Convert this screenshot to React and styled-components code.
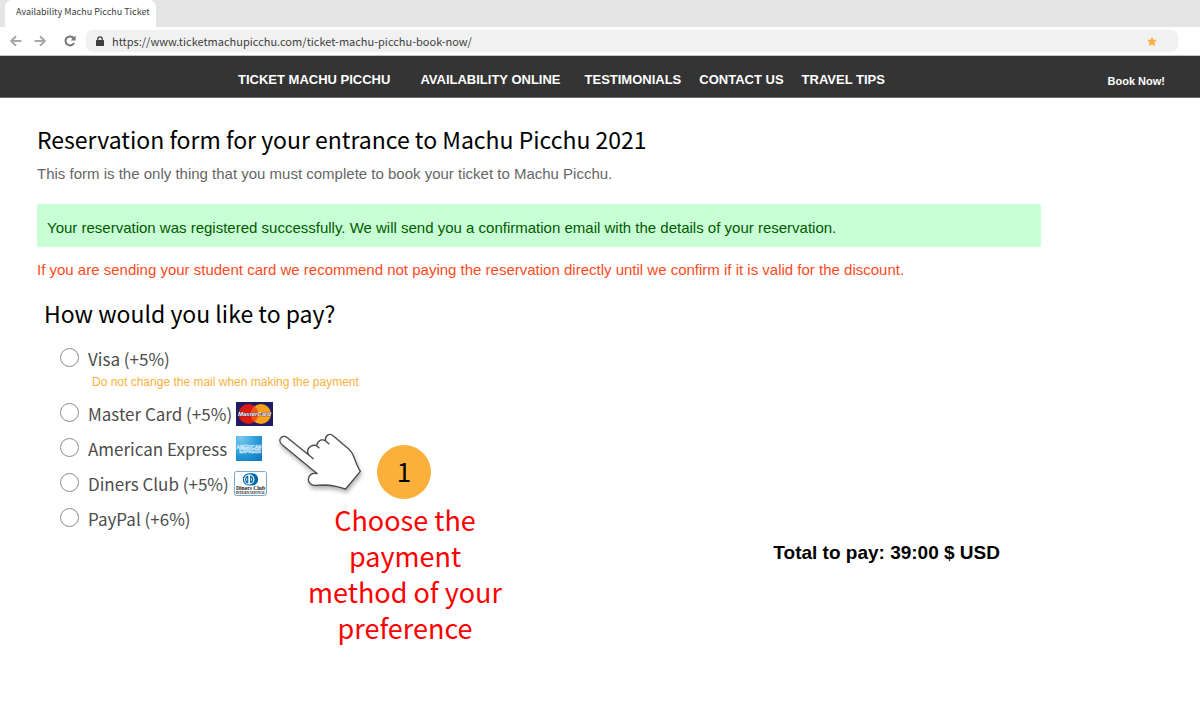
import { useState } from 'react';
import styled, { createGlobalStyle } from 'styled-components';

const NAV_LINKS = [
  { label: 'TICKET MACHU PICCHU', gap: 30 },
  { label: 'AVAILABILITY ONLINE', gap: 24 },
  { label: 'TESTIMONIALS', gap: 18 },
  { label: 'CONTACT US', gap: 18 },
  { label: 'TRAVEL TIPS', gap: 0 },
];

const METHODS = [
  {
    id: 'visa',
    label: 'Visa (+5%)',
    note: 'Do not change the mail when making the payment',
  },
  { id: 'master', label: 'Master Card (+5%)', logo: MasterCardLogo, gap: 4 },
  { id: 'amex', label: 'American Express', logo: AmexLogo, gap: 9 },
  { id: 'diners', label: 'Diners Club (+5%)', logo: DinersLogo, gap: 5 },
  { id: 'paypal', label: 'PayPal (+6%)' },
];

function MasterCardLogo() {
  return (
    <svg width="37" height="24" viewBox="0 0 37 24" aria-hidden="true">
      <rect width="37" height="24" fill="#1f1c63" />
      <circle cx="12.5" cy="12" r="10" fill="#dc1c12" />
      <circle cx="25" cy="12" r="10" fill="#f9a11b" />
      <path d="M18.7 4.2a10 10 0 0 1 0 15.6a10 10 0 0 1 0-15.6z" fill="#ee5a1a" />
      <text
        x="18.5"
        y="14.4"
        textAnchor="middle"
        fontFamily="Liberation Sans, sans-serif"
        fontSize="6"
        fontWeight="700"
        fontStyle="italic"
        fill="#fff"
        stroke="#3a1a40"
        strokeWidth="0.7"
        paintOrder="stroke"
      >
        MasterCard
      </text>
    </svg>
  );
}

function AmexLogo() {
  return (
    <svg width="26" height="25" viewBox="0 0 26 25" aria-hidden="true">
      <defs>
        <radialGradient id="amexBlue" cx="0.2" cy="0.1" r="1.1">
          <stop offset="0" stopColor="#7cc8ee" />
          <stop offset="0.5" stopColor="#2f9fdc" />
          <stop offset="1" stopColor="#0f7cc2" />
        </radialGradient>
      </defs>
      <rect width="26" height="25" fill="url(#amexBlue)" />
      <g
        fontFamily="Liberation Sans, sans-serif"
        fontSize="4.6"
        fontWeight="700"
        fill="none"
        stroke="#c9e8f8"
        strokeWidth="0.5"
        textAnchor="middle"
      >
        <text x="13" y="12.6">AMERICAN</text>
        <text x="14" y="17">EXPRESS</text>
      </g>
    </svg>
  );
}

function DinersLogo() {
  return (
    <svg width="33" height="25" viewBox="0 0 33 25" aria-hidden="true">
      <rect x="0.5" y="0.5" width="32" height="24" rx="2" fill="#fff" stroke="#78a9cf" />
      <path d="M15 2.2h3a6.2 6.2 0 0 1 0 12.4h-3a6.2 6.2 0 0 1 0-12.4z" fill="#0069aa" />
      <circle cx="15.2" cy="8.4" r="5.2" fill="#fff" />
      <path
        d="M14.3 4.4a4.1 4.1 0 0 0 0 8zM16.1 4.4a4.1 4.1 0 0 1 0 8z"
        fill="#0069aa"
      />
      <path d="M13.2 6.4a2.6 2.6 0 0 0 0 4zM17.2 6.4a2.6 2.6 0 0 1 0 4z" fill="#fff" />
      <g textAnchor="middle" fill="#111" fontWeight="700">
        <text x="16.5" y="19.4" fontFamily="Liberation Serif, serif" fontSize="5.6">
          Diners Club
        </text>
        <text x="16.5" y="23.1" fontFamily="Liberation Serif, serif" fontSize="3.5">
          INTERNATIONAL
        </text>
      </g>
    </svg>
  );
}

function ArrowIcon({ flip }) {
  return (
    <svg width="12" height="12" viewBox="0 0 12 12" aria-hidden="true">
      <path
        d="M11.5 6H1.5M6 1.2L1.2 6L6 10.8"
        transform={flip ? 'translate(12 0) scale(-1 1)' : undefined}
        fill="none"
        stroke="#a9a9a9"
        strokeWidth="2"
      />
    </svg>
  );
}

function ReloadIcon() {
  return (
    <svg width="12" height="12" viewBox="0 0 12 12" aria-hidden="true">
      <path d="M9.6 3.2A4.5 4.5 0 1 0 10 8" fill="none" stroke="#757575" strokeWidth="2" />
      <path d="M11.6 0.4v5H6.6z" fill="#757575" />
    </svg>
  );
}

function LockIcon() {
  return (
    <svg width="8" height="10" viewBox="0 0 8 10" aria-hidden="true">
      <rect y="4" width="8" height="6" rx="0.6" fill="#404040" />
      <path d="M1.8 4.5V3a2.2 2.2 0 0 1 4.4 0v1.5" fill="none" stroke="#404040" strokeWidth="1.3" />
    </svg>
  );
}

function StarIcon() {
  return (
    <svg width="10" height="10" viewBox="0 0 10 10" aria-hidden="true">
      <path
        d="M5 1.4l1.3 2.6 3 .4-2.2 2.1.5 3L5 8.1 2.4 9.5l.5-3L.7 4.4l3-.4z"
        fill="#fbb03b"
        stroke="#fbb03b"
        strokeWidth="0.6"
        strokeLinejoin="round"
      />
    </svg>
  );
}

function HandIcon() {
  return (
    <StyledHand width="84" height="58" viewBox="24 24 252 174" aria-hidden="true">
      <path
        d="M131 102L52 38C44 31 33 34 30 43C28 50 32 56 38 61L142 146C125 143 115 151 115 163C115 174 124 181 134 181L165 180C190 180 205 186 227 192L271 139C261 124 256 105 248 88C243 76 232 68 222 60L190 33C178 22 164 32 167 48C158 41 144 44 140 62C129 58 115 64 113 77C112 84 114 87 117 90"
        fill="#fff"
      />
      <path
        d="M131 102L52 38C44 31 33 34 30 43C28 50 32 56 38 61L142 146C125 143 115 151 115 163C115 174 124 181 134 181L165 180C190 180 205 186 227 192L271 139C261 124 256 105 248 88C243 76 232 68 222 60L190 33C178 22 164 32 167 48L178 58M167 48C158 41 144 44 140 62L148 70M140 62C129 58 115 64 113 77C112 84 114 87 117 90"
        fill="none"
        stroke="#4a4a4a"
        strokeWidth="4"
        strokeLinejoin="round"
      />
    </StyledHand>
  );
}

function Browser() {
  return (
    <header>
      <TabStrip>
        <Tab>Availability Machu Picchu Ticket</Tab>
      </TabStrip>
      <Toolbar>
        <IconButton type="button" aria-label="Back">
          <ArrowIcon />
        </IconButton>
        <IconButton type="button" aria-label="Forward">
          <ArrowIcon flip />
        </IconButton>
        <IconButton type="button" aria-label="Reload">
          <ReloadIcon />
        </IconButton>
        <AddressBar>
          <LockIcon />
          <input
            type="text"
            aria-label="Address"
            defaultValue="https://www.ticketmachupicchu.com/ticket-machu-picchu-book-now/"
          />
          <IconButton type="button" aria-label="Bookmark">
            <StarIcon />
          </IconButton>
        </AddressBar>
      </Toolbar>
    </header>
  );
}

function PaymentForm() {
  const [method, setMethod] = useState('');

  return (
    <StyledForm>
      {METHODS.map(({ id, label, note, logo: Logo, gap }) => (
        <div key={id}>
          <MethodRow $gap={gap}>
            <Radio
              type="radio"
              id={id}
              name="method"
              value={id}
              checked={method === id}
              onChange={(event) => setMethod(event.target.value)}
            />
            <label htmlFor={id}>{label}</label>
            {Logo && <Logo />}
          </MethodRow>
          {note && <MethodNote>{note}</MethodNote>}
        </div>
      ))}
    </StyledForm>
  );
}

function App() {
  return (
    <>
      <GlobalStyle />
      <Browser />
      <NavBar>
        <NavLinks>
          {NAV_LINKS.map(({ label, gap }) => (
            <NavLink key={label} href="#" $gap={gap}>
              {label}
            </NavLink>
          ))}
        </NavLinks>
        <BookLink href="#">Book Now!</BookLink>
      </NavBar>

      <Main>
        <Title>Reservation form for your entrance to Machu Picchu 2021</Title>
        <Intro>
          This form is the only thing that you must complete to book your ticket to Machu Picchu.
        </Intro>
        <Success role="status">
          Your reservation was registered successfully. We will send you a confirmation email with
          the details of your reservation.
        </Success>
        <Warning>
          If you are sending your student card we recommend not paying the reservation directly
          until we confirm if it is valid for the discount.
        </Warning>
        <SubTitle>How would you like to pay?</SubTitle>

        <Checkout>
          <PaymentForm />
          <Guide>
            <Pointer>
              <HandIcon />
              <Step>1</Step>
            </Pointer>
            <GuideText>Choose the payment method of your preference</GuideText>
          </Guide>
          <Total>Total to pay: 39:00 $ USD</Total>
        </Checkout>
      </Main>
    </>
  );
}

export default App;

const humanist = "'Noto Sans CJK SC', 'Noto Sans', sans-serif";
const grotesque = "'Liberation Sans', Arial, sans-serif";

const GlobalStyle = createGlobalStyle`
  * {
    box-sizing: border-box;
  }

  body {
    margin: 0;
    background: #fff;
    font-family: ${grotesque};
  }

  h1, h2, p {
    margin: 0;
    font-weight: 400;
  }
`;

const TabStrip = styled.div`
  display: flex;
  height: 27px;
  padding-left: 5px;
  background: #e5e5e5;
`;

const Tab = styled.div`
  padding: 0 6px 0 11px;
  border-radius: 7px 7px 0 0;
  background: #fff;
  color: #404040;
  font-family: ${humanist};
  font-size: 9px;
  line-height: 23px;
`;

const Toolbar = styled.div`
  display: flex;
  align-items: center;
  gap: 12px;
  height: 28px;
  padding: 0 22px 0 10px;

  & > button:nth-of-type(3) {
    margin-left: 6px;
  }
`;

const IconButton = styled.button`
  display: flex;
  padding: 0;
  border: 0;
  background: transparent;
  cursor: pointer;
`;

const AddressBar = styled.div`
  display: flex;
  flex: 1;
  align-items: center;
  gap: 8px;
  height: 22px;
  margin-left: -2px;
  padding: 0 21px 0 10px;
  border-radius: 7px;
  background: #f1f1f1;

  & input {
    flex: 1;
    min-width: 0;
    padding: 0;
    border: 0;
    outline: none;
    background: transparent;
    color: #404040;
    font-family: ${humanist};
    font-size: 11px;
    line-height: 20px;
  }
`;

const NavBar = styled.nav`
  display: flex;
  align-items: center;
  justify-content: space-between;
  height: 43px;
  padding: 6px 35px 0 238px;
  border-top: 1px solid #c4c4c4;
  border-bottom: 1px solid #6e6e6e;
  background: #343434;
`;

const NavLinks = styled.div`
  display: flex;
`;

const NavLink = styled.a`
  margin-right: ${({ $gap }) => $gap}px;
  color: #fff;
  font-size: 13px;
  font-weight: 700;
  line-height: 16px;
  text-decoration: none;
  white-space: nowrap;
`;

const BookLink = styled(NavLink)`
  margin-right: 0;
  padding-top: 3px;
  font-size: 11px;
`;

const Main = styled.main`
  padding: 23px 159px 24px 37px;
`;

const Title = styled.h1`
  color: #000;
  font-family: ${humanist};
  font-size: 23px;
  line-height: 36px;
`;

const Intro = styled.p`
  margin-top: 5px;
  color: #666;
  font-size: 15px;
  line-height: 24px;
`;

const Success = styled.p`
  margin-top: 18px;
  padding: 12px 10px 7px;
  border-radius: 2px;
  background: #c9ffd5;
  color: #005a00;
  font-size: 15px;
  line-height: 24px;
`;

const Warning = styled.p`
  margin-top: 11px;
  color: #ff4a1c;
  font-size: 15px;
  line-height: 24px;
`;

const SubTitle = styled.h2`
  margin-top: 13px;
  padding-left: 7px;
  color: #000;
  font-family: ${humanist};
  font-size: 23px;
  line-height: 36px;
`;

const Checkout = styled.section`
  display: grid;
  grid-template-columns: 241px 227px 1fr;
  margin-top: 10px;
`;

const StyledForm = styled.form`
  padding-left: 23px;
  white-space: nowrap;
`;

const MethodRow = styled.div`
  display: flex;
  align-items: center;
  height: 35px;

  & label {
    color: #4d4d4d;
    font-family: ${humanist};
    font-size: 17px;
    line-height: 35px;
  }

  & svg {
    flex-shrink: 0;
    margin-left: ${({ $gap }) => $gap}px;
  }
`;

const Radio = styled.input`
  appearance: none;
  flex-shrink: 0;
  width: 19px;
  height: 19px;
  margin: 0 9px 3px 0;
  border: 1px solid #8c8c8c;
  border-radius: 50%;
  background: #fff;

  &:checked {
    background: radial-gradient(#4d4d4d 40%, #fff 45%);
  }
`;

const MethodNote = styled.p`
  padding: 1px 0 9px 32px;
  color: #fbb03b;
  font-size: 12px;
  line-height: 10px;
`;

const Guide = styled.aside`
  display: flex;
  flex-direction: column;
  padding-top: 92px;
`;

const Pointer = styled.div`
  display: flex;
  align-items: flex-end;
  gap: 15px;
`;

const StyledHand = styled.svg`
  margin-bottom: 8px;
  overflow: visible;
  filter: drop-shadow(1px 3px 2px rgba(0, 0, 0, 0.3));
`;

const Step = styled.div`
  width: 54px;
  height: 54px;
  border-radius: 50%;
  background: #fbb03b;
  color: #000;
  font-family: ${humanist};
  font-size: 26px;
  line-height: 52px;
  text-align: center;
`;

const GuideText = styled.p`
  align-self: flex-end;
  width: 200px;
  margin-top: 3px;
  color: #f00;
  font-family: ${humanist};
  font-size: 27px;
  line-height: 36px;
  text-align: center;
`;

const Total = styled.p`
  justify-self: end;
  padding: 200px 41px 0 0;
  color: #000;
  font-size: 19px;
  font-weight: 700;
  line-height: 24px;
`;
